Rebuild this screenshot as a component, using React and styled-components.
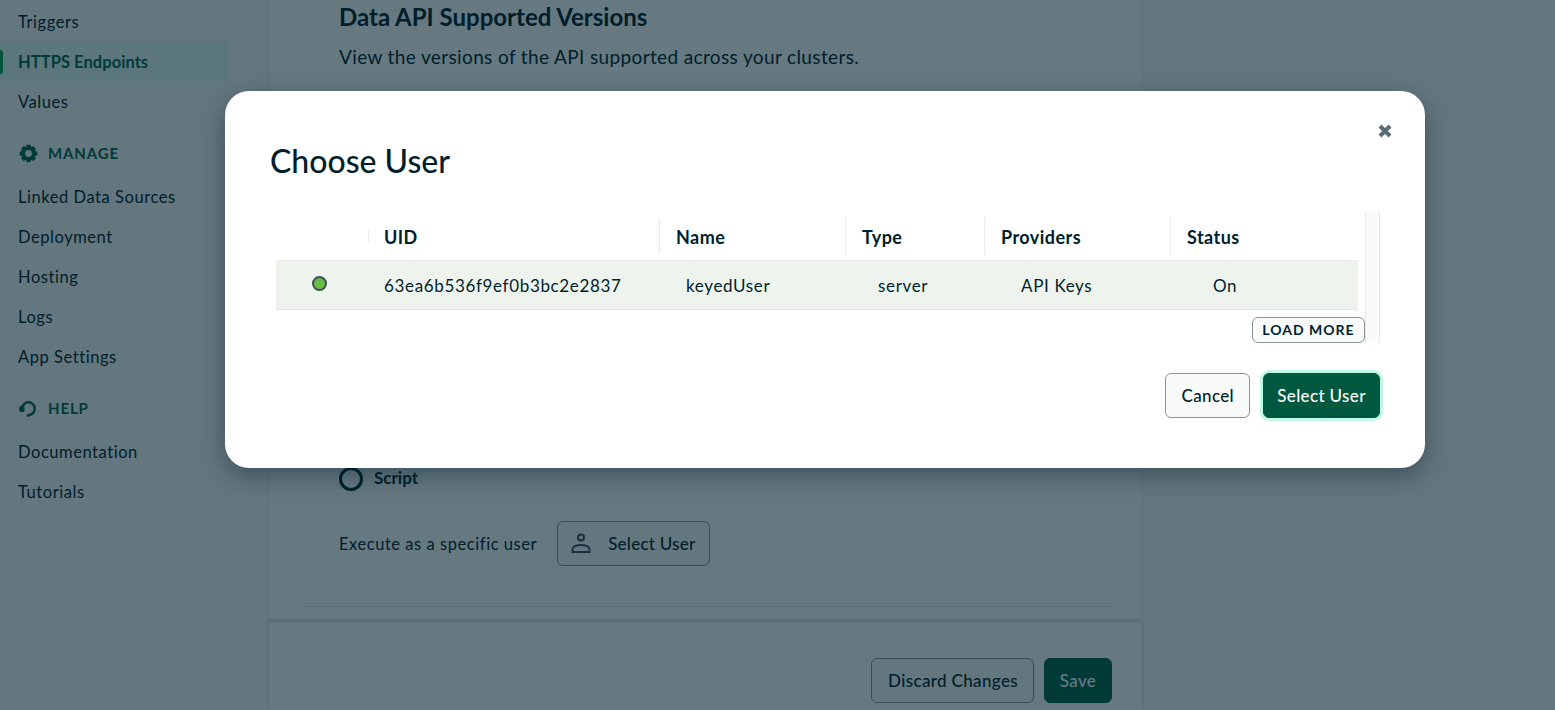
import React from "react";
import styled, { createGlobalStyle } from "styled-components";

const GlobalStyle = createGlobalStyle`
	html, body {
		margin: 0;
		height: 100%;
		overflow: hidden;
		background: #fff;
		color: #001e2b;
		font-family: "Lato", "Noto Sans", sans-serif;
	}
	* {
		box-sizing: border-box;
	}
`;

const Page = styled.div`
	display: flex;
	height: 710px;
	overflow: hidden;
	position: relative;
	background: #f9fbfa;
`;

const Sidebar = styled.aside`
	display: flex;
	flex-direction: column;
	flex: none;
	width: 228px;
	padding-top: 1px;
`;

const NavItem = styled.div`
	display: flex;
	align-items: center;
	height: 40px;
	padding: 1px 0 0 18px;
	font-size: 16.5px;
	letter-spacing: ${(props) => (props.$active ? "0.05px" : "0.55px")};
	position: relative;
	color: ${(props) => (props.$active ? "#00684a" : "#001e2b")};
	font-weight: ${(props) => (props.$active ? 700 : 400)};
	background: ${(props) => (props.$active ? "#e3fcf7" : "transparent")};

	&::before {
		content: ${(props) => (props.$active ? '""' : "none")};
		position: absolute;
		left: -3px;
		top: 9px;
		width: 6px;
		height: 24px;
		border-radius: 3px;
		background: #00a35c;
	}
`;

const NavGroup = styled.div`
	display: flex;
	align-items: center;
	gap: 10px;
	height: 40px;
	margin: 12px 0 3px;
	padding-left: 19px;
	color: #00684a;
	font-size: 15px;
	font-weight: 700;
	letter-spacing: 0.85px;
`;

const NavIcon = styled.svg`
	width: 19px;
	height: 19px;
	flex: none;
`;

const Card = styled.main`
	display: flex;
	flex-direction: column;
	width: 875px;
	margin-left: 40px;
	background: #fff;
	border-left: 1px solid #e8edeb;
	border-right: 1px solid #e8edeb;
`;

const Body = styled.div`
	display: flex;
	flex-direction: column;
	flex: 1;
	padding: 2px 30px 0 70px;
`;

const Heading = styled.h2`
	margin: 0;
	font-size: 24px;
	line-height: 30px;
	font-weight: 700;
`;

const Lead = styled.p`
	margin: 12px 0 0;
	font-size: 19px;
	line-height: 26px;
	letter-spacing: 0.37px;
`;

const RadioRow = styled.div`
	display: flex;
	align-items: center;
	gap: 11px;
	margin-top: 397px;
	font-size: 17px;
	font-weight: 700;
`;

const RadioRing = styled.span`
	width: 24px;
	height: 24px;
	border-radius: 50%;
	border: 3px solid #001e2b;
	background: #fff;
`;

const RadioLabel = styled.span`
	margin-top: -4px;
`;

const ExecuteRow = styled.div`
	display: flex;
	align-items: center;
	gap: 20px;
	margin-top: 30px;
	font-size: 16.5px;
	letter-spacing: 0.55px;
`;

const Divider = styled.hr`
	height: 1px;
	margin: 40px 0 0 -40px;
	border: 0;
	background: #e8edeb;
`;

const Footer = styled.footer`
	display: flex;
	justify-content: flex-end;
	gap: 10px;
	height: 88px;
	margin-top: 15px;
	padding: 35px 30px 0 0;
	border-top: 1px solid #e8edeb;
	box-shadow: 0 -3px 4px rgba(0, 30, 43, 0.12);
`;

const Button = styled.button`
	display: inline-flex;
	align-items: center;
	justify-content: center;
	height: 45px;
	padding: 0 15px 1px 16px;
	border-radius: 6px;
	border: 1px solid #889397;
	background: #f9fbfa;
	color: #001e2b;
	font-family: inherit;
	font-size: 17px;
	font-weight: 500;
	letter-spacing: 0.35px;
`;

const UserButton = styled(Button)`
	gap: 17px;
	padding: 0 13px 1px;
	letter-spacing: 0.25px;
`;

const PrimaryButton = styled(Button)`
	border-color: ${(props) => (props.$focused ? "#00593f" : "#00684a")};
	background: ${(props) => (props.$focused ? "#00593f" : "#00684a")};
	color: #fff;
	width: ${(props) => props.$width}px;
	padding: 0 0 1px;
	${(props) => props.$focused && "box-shadow: 0 0 0 3px #c0fae6;"}
`;

const Overlay = styled.div`
	position: absolute;
	inset: 0;
	background: rgba(0, 30, 43, 0.6);
`;

const Modal = styled.section`
	position: absolute;
	top: 91px;
	left: 225px;
	width: 1200px;
	height: 377px;
	padding: 50px 45px 0;
	border-radius: 24px;
	background: #fff;
	box-shadow: 0 8px 24px rgba(0, 30, 43, 0.4);
`;

const CloseIcon = styled.svg`
	position: absolute;
	top: 33px;
	right: 33px;
	width: 14px;
	height: 14px;
`;

const ModalTitle = styled.h1`
	margin: 0;
	font-size: 32px;
	line-height: 40px;
	font-weight: 500;
`;

const TableArea = styled.div`
	display: flex;
	margin-top: 31px;
	padding-left: 6px;
	height: 131px;
`;

const TableColumn = styled.div`
	display: flex;
	flex-direction: column;
	width: 1082px;
`;

const Scrollbar = styled.div`
	width: 15px;
	margin-left: 7px;
	background: #fafafa;
	border-left: 1px solid #e8e8e8;
	border-right: 1px solid #e8e8e8;
`;

const tableColumns = "92px 291px 186px 139px 186px 1fr";

const HeaderRow = styled.div`
	display: grid;
	grid-template-columns: ${tableColumns};
	align-items: center;
	height: 49px;
	border-bottom: 1px solid #e8edeb;
`;

const HeaderCell = styled.div`
	position: relative;
	height: 36px;
	display: flex;
	align-items: center;
	padding: 2px 0 0 16px;
	margin-top: 1px;
	border-left: ${(props) => (props.$short || props.$bare ? "0" : "1px solid #e8edeb")};
	font-size: 18px;
	font-weight: 700;
	letter-spacing: 0.45px;

	&::before {
		content: ${(props) => (props.$short ? '""' : "none")};
		position: absolute;
		left: 0;
		top: 12px;
		width: 1px;
		height: 12px;
		background: #e8edeb;
	}
`;

const DataRow = styled.div`
	display: grid;
	grid-template-columns: ${tableColumns};
	align-items: center;
	height: 50px;
	padding-top: 1px;
	background: #eef3ed;
	border-bottom: 1px solid #dfe5e2;
`;

const DataCell = styled.div`
	padding-left: ${(props) => props.$inset}px;
	font-size: 17px;
	letter-spacing: 0.65px;
`;

const SelectedRadio = styled.span`
	display: block;
	width: 15px;
	height: 15px;
	margin: -3px 0 0 36px;
	border-radius: 50%;
	background: #68bc3f;
	border: 2px solid #3d4f58;
`;

const LoadMoreRow = styled.div`
	display: flex;
	justify-content: flex-end;
	margin: 7px -7px 0 0;
`;

const LoadMore = styled.button`
	width: 113px;
	height: 26px;
	padding: 0 0 1px;
	border-radius: 6px;
	border: 1px solid #889397;
	background: #f9fbfa;
	color: #001e2b;
	font-family: inherit;
	font-size: 14px;
	font-weight: 700;
	letter-spacing: 1px;
`;

const ModalActions = styled.div`
	display: flex;
	justify-content: flex-end;
	align-items: center;
	gap: 13px;
	margin-top: 30px;
`;

const GearIcon = () => (
	<NavIcon viewBox="0 0 20 20">
		<circle cx="10" cy="10" r="5.6" fill="none" stroke="#00684a" strokeWidth="4" />
		{[0, 45, 90, 135, 180, 225, 270, 315].map((angle) => (
			<rect key={angle} x="7.6" y="0.8" width="4.8" height="4" rx="1.2" fill="#00684a" transform={`rotate(${angle} 10 10)`} />
		))}
	</NavIcon>
);

const HeadsetIcon = () => (
	<NavIcon viewBox="0 0 20 20">
		<path d="M3.5 10a6.500 6.500 0 0 1 13 0c0 4-2.500 6.500-6.500 7" fill="none" stroke="#00684a" strokeWidth="2.6" />
		<ellipse cx="3" cy="10.500" rx="3" ry="3.500" fill="#00684a" />
		<circle cx="9.800" cy="17" r="1.600" fill="#00684a" />
	</NavIcon>
);

const UserIcon = () => (
	<svg width="20" height="20" viewBox="0 0 20 20" fill="none" stroke="#3d4f58" strokeWidth="2">
		<circle cx="10" cy="4.500" r="3" />
		<path d="M1.500 19v-2.500c0-2.800 4-4.500 8.500-4.500s8.500 1.700 8.500 4.500V19z" />
	</svg>
);

const navTop = [
	{ label: "Triggers" },
	{ label: "HTTPS Endpoints", active: true },
	{ label: "Values" },
];
const navManage = ["Linked Data Sources", "Deployment", "Hosting", "Logs", "App Settings"];
const navHelp = ["Documentation", "Tutorials"];

const App = () => (
	<>
		<GlobalStyle />
		<Page>
			<Sidebar>
				{navTop.map((item) => (
					<NavItem key={item.label} $active={item.active}>
						{item.label}
					</NavItem>
				))}
				<NavGroup>
					<GearIcon />
					MANAGE
				</NavGroup>
				{navManage.map((label) => (
					<NavItem key={label}>{label}</NavItem>
				))}
				<NavGroup>
					<HeadsetIcon />
					HELP
				</NavGroup>
				{navHelp.map((label) => (
					<NavItem key={label}>{label}</NavItem>
				))}
			</Sidebar>
			<Card>
				<Body>
					<Heading>Data API Supported Versions</Heading>
					<Lead>View the versions of the API supported across your clusters.</Lead>
					<RadioRow>
						<RadioRing />
						<RadioLabel>Script</RadioLabel>
					</RadioRow>
					<ExecuteRow>
						Execute as a specific user
						<UserButton>
							<UserIcon />
							Select User
						</UserButton>
					</ExecuteRow>
					<Divider />
				</Body>
				<Footer>
					<Button>Discard Changes</Button>
					<PrimaryButton $width={68}>Save</PrimaryButton>
				</Footer>
			</Card>
			<Overlay />
			<Modal>
				<CloseIcon viewBox="0 0 14 14">
					<path d="M2 2l10 10M12 2L2 12" stroke="#5c6c75" strokeWidth="4" />
				</CloseIcon>
				<ModalTitle>Choose User</ModalTitle>
				<TableArea>
					<TableColumn>
						<HeaderRow>
							<HeaderCell $bare />
							<HeaderCell $short>UID</HeaderCell>
							<HeaderCell>Name</HeaderCell>
							<HeaderCell>Type</HeaderCell>
							<HeaderCell>Providers</HeaderCell>
							<HeaderCell>Status</HeaderCell>
						</HeaderRow>
						<DataRow>
							<DataCell $inset={0}>
								<SelectedRadio />
							</DataCell>
							<DataCell $inset={16}>63ea6b536f9ef0b3bc2e2837</DataCell>
							<DataCell $inset={27}>keyedUser</DataCell>
							<DataCell $inset={33}>server</DataCell>
							<DataCell $inset={37}>API Keys</DataCell>
							<DataCell $inset={43}>On</DataCell>
						</DataRow>
						<LoadMoreRow>
							<LoadMore>LOAD MORE</LoadMore>
						</LoadMoreRow>
					</TableColumn>
					<Scrollbar />
				</TableArea>
				<ModalActions>
					<Button>Cancel</Button>
					<PrimaryButton $width={117} $focused>
						Select User
					</PrimaryButton>
				</ModalActions>
			</Modal>
		</Page>
	</>
);

export default App;
